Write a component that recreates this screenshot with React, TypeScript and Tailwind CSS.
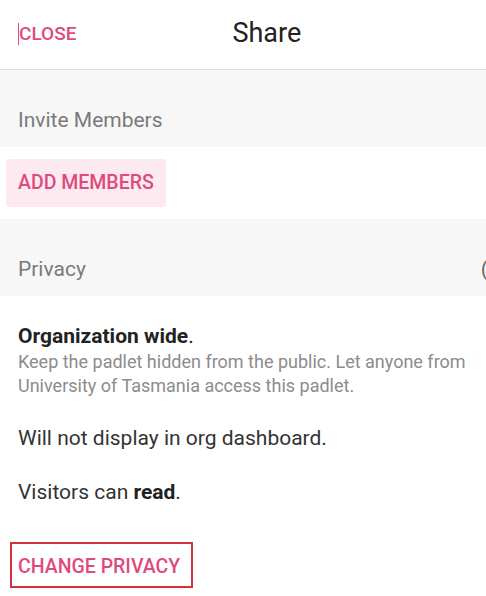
const pink = "text-[#df4a7e]";

export default function App() {
  return (
    <div className="w-[486px] h-[596px] overflow-hidden bg-white font-['Roboto',sans-serif]">
      {/* header */}
      <div className="h-[70px] flex items-start border-b border-[#dcdcdc]">
        <div className="pl-[18px] pt-[22px] flex items-center">
          <span className="w-px h-[22px] bg-[#df4a7e]" />
          <span className={`${pink} text-[19px] leading-[24px] font-medium`}>CLOSE</span>
        </div>
        <div className="ml-[156px] pt-[17px] text-[27px] leading-[32px] text-[#222]">Share</div>
      </div>

      {/* invite */}
      <div className="h-[77px] bg-[#f7f7f7] pl-[18px] pt-[38px] text-[21px] leading-[24px] text-[#7a7a7a]">
        Invite Members
      </div>
      <div className="py-[12px] pl-[6px]">
        <button className={`h-[48px] px-[12px] rounded-[3px] bg-[#fdeaf1] ${pink} text-[19.5px] font-medium leading-[24px]`}>
          ADD MEMBERS
        </button>
      </div>

      {/* privacy */}
      <div className="h-[77px] bg-[#f7f7f7] pl-[18px] pt-[38px] flex justify-between overflow-hidden text-[21px] leading-[24px] text-[#7a7a7a]">
        <span>Privacy</span>
        <span className="-mr-[2px] text-[#6a6a6a]">(</span>
      </div>

      <div className="px-[18px] pt-[28px]">
        <p className="text-[21px] leading-[24px] text-[#222]">
          <b className="font-bold">Organization wide</b>.
        </p>
        <p className="mt-[2px] text-[18px] leading-[24px] text-[#8c8c8c]">
          Keep the padlet hidden from the public. Let anyone from University of Tasmania access this padlet.
        </p>
        <p className="mt-[28px] text-[21px] leading-[24px] text-[#333]">Will not display in org dashboard.</p>
        <p className="mt-[30px] text-[21px] leading-[24px] text-[#333]">
          Visitors can <b className="font-bold text-[#222]">read</b>.
        </p>
      </div>
      <div className="pl-[10px] mt-[38px]">
        <button className={`w-[183px] h-[46px] px-[6px] pt-[4px] text-left border-2 border-[#d2323c] ${pink} text-[19.5px] font-medium leading-[24px]`}>
          CHANGE PRIVACY
        </button>
      </div>
    </div>
  );
}
